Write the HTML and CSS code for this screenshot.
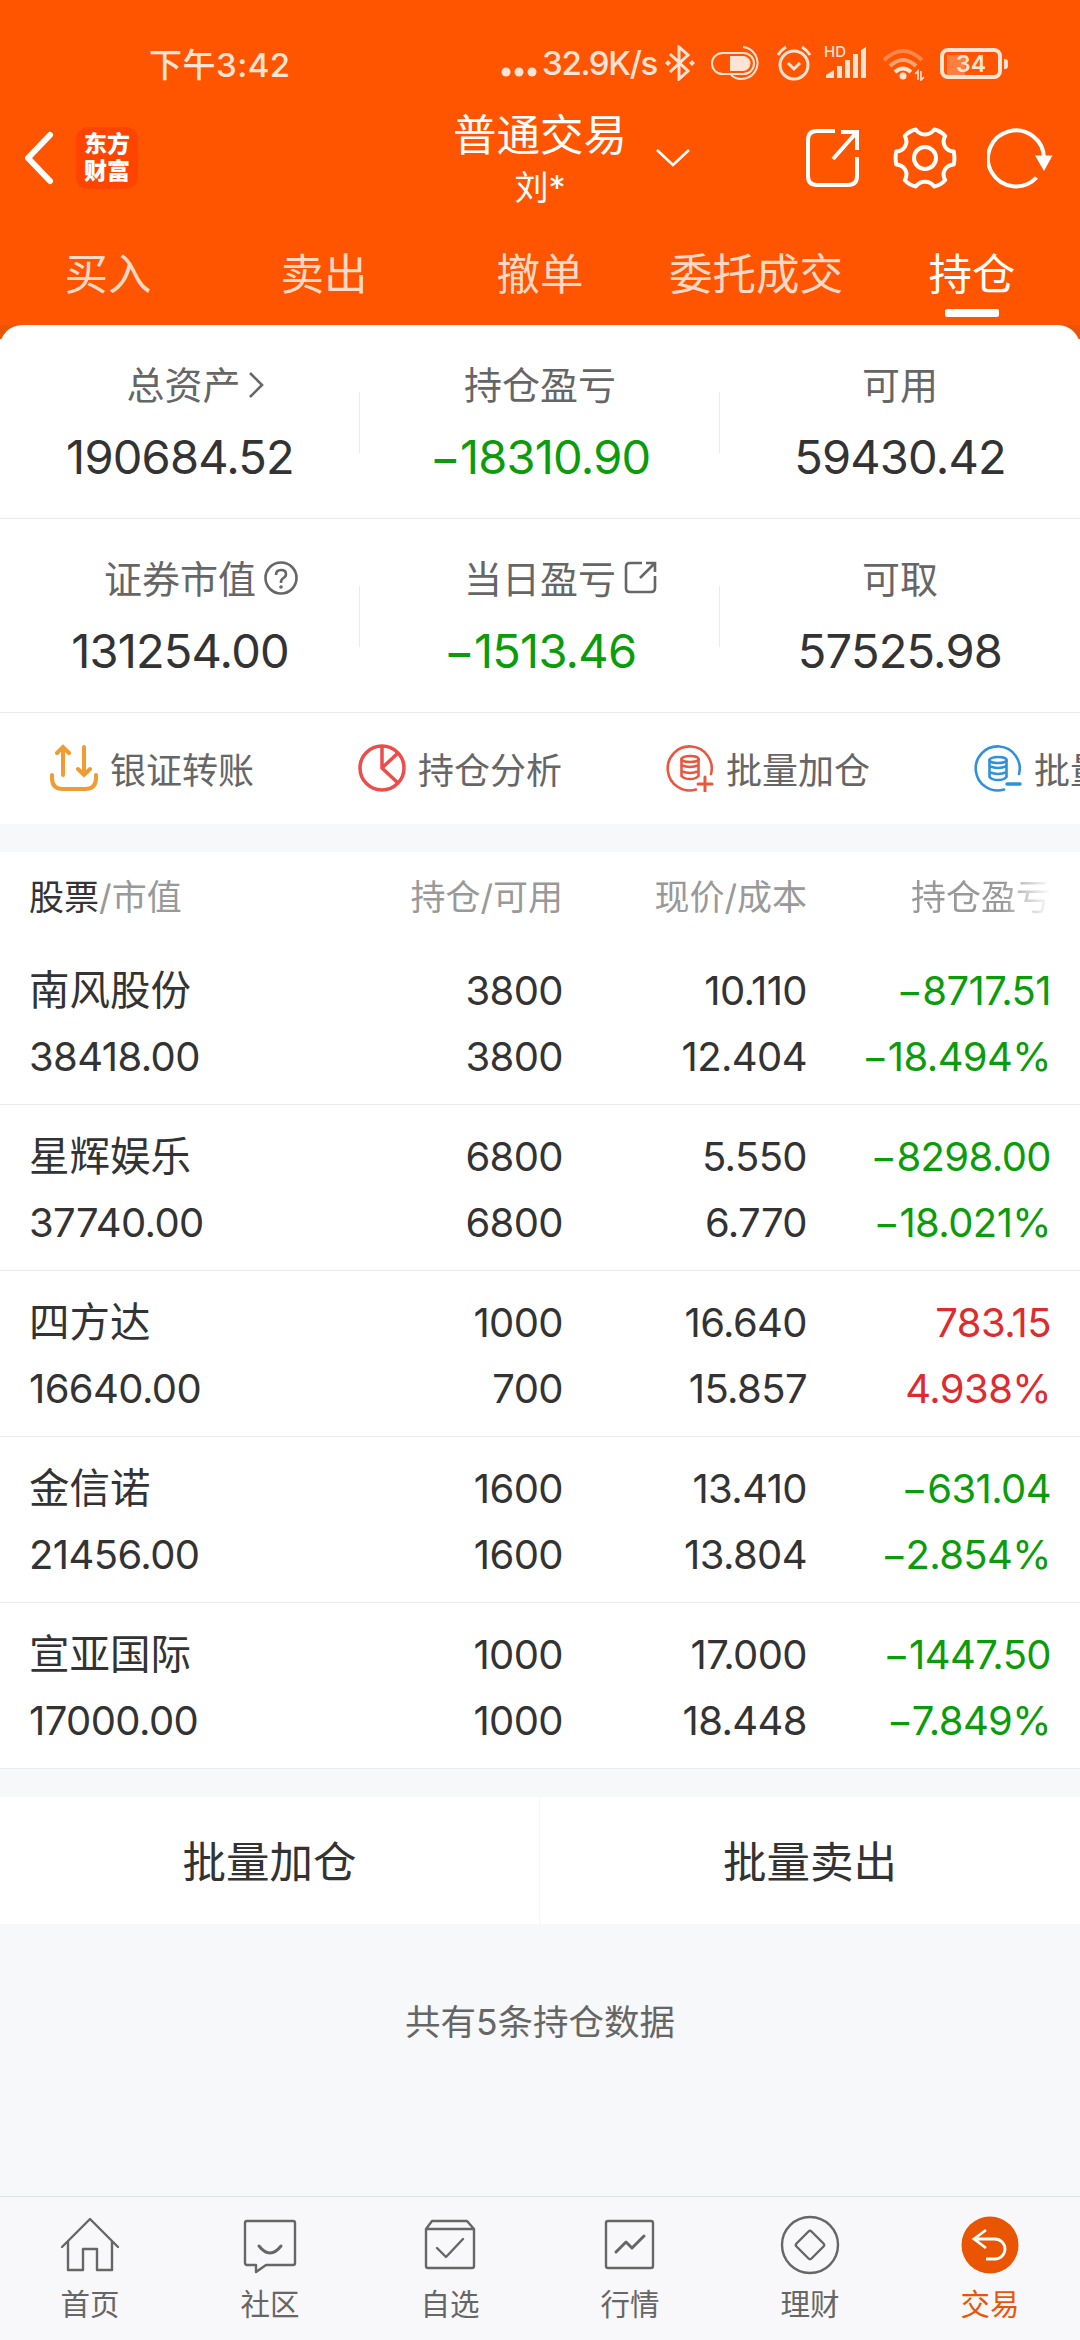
FILE: index.html
```html
<!DOCTYPE html>
<html lang="zh-CN">

<head>
    <meta charset="UTF-8">
    <meta name="viewport" content="width=device-width, initial-scale=1.0">
    <link rel="stylesheet" href="styles.css">
    <title>普通交易</title>
</head>

<body>

    <div class="header">
        <div class="status">
            <span class="clock">下午3:42</span>
            <svg class="dots" width="36" height="40"><g fill="currentColor"><circle cx="5" cy="29" r="4.5"/><circle cx="18" cy="29" r="4.5"/><circle cx="31" cy="29" r="4.5"/></g></svg>
            <span class="speed">32.9K/s</span>
            <svg class="bluetooth" width="30" height="36" fill="none" stroke="currentColor" stroke-width="3"><path d="M5 9L23 26L14 34V2L23 10L5 27"/><path d="M0 18l3-3 3 3-3 3zM24 18l3-3 3 3-3 3z" fill="currentColor" stroke="none"/></svg>
            <svg class="pill" width="50" height="36" fill="none" stroke="currentColor" stroke-width="2"><rect x="1" y="8" width="42" height="21" rx="10.5"/><path d="M32 2a16 16 0 1 1-12 28"/><path d="M19 11h13a7.500 7.500 0 0 1 0 15H19z" fill="currentColor" stroke="none"/></svg>
            <svg class="alarm" width="36" height="36" fill="none" stroke="currentColor" stroke-width="3"><circle cx="18" cy="20" r="14"/><path d="M12 18l6 6 6-6M2 10q3-5 8-8M34 10q-3-5-8-8"/></svg>
            <span class="signal">
                <small>HD</small>
                <svg width="42" height="36" fill="currentColor"><path d="M1 33v-3l8-5v8zM12 21h5v12h-5zM20 15h5v18h-5zM28 9h5v24h-5zM36 5l5-3v31h-5z"/></svg>
            </span>
            <svg class="wifi" width="43" height="36" fill="none" stroke="currentColor" stroke-width="4"><path d="M2 15q19-18 38 0" opacity=".35"/><path d="M8 21q13-12 26 0" opacity=".55"/><path d="M13 27q8-7 16 0"/><circle cx="21" cy="31" r="3.500" fill="currentColor" stroke="none"/><path d="M36 35v-9l-3 3M39 26v9l3-3" stroke-width="1.600"/></svg>
            <span class="battery"><b>34</b></span>
        </div>

        <div class="titlebar">
            <svg class="back" width="32" height="56" fill="none" stroke="currentColor" stroke-width="6" stroke-linecap="round" stroke-linejoin="round"><path d="M28 5L6 28L28 51"/></svg>
            <div class="logo">东方<br>财富</div>
            <div class="title">
                <h1>普通交易</h1>
                <p>刘*</p>
            </div>
            <svg class="down" width="36" height="20" fill="none" stroke="currentColor" stroke-width="2.600"><path d="M2 2L18 17L34 2"/></svg>
            <svg class="share" width="56" height="60" fill="none" stroke="currentColor" stroke-width="4"><path d="M30 3H12Q3 3 3 12V48Q3 57 12 57H43Q52 57 52 48V29M28 31L51 5M36 4H52V22"/></svg>
            <svg class="gear" width="64" height="64" viewBox="-32 -32 64 64" fill="none" stroke="currentColor" stroke-width="4" stroke-linejoin="round"><path d="M-9.200-28.500C-5-22 5-22 9.200-28.500Q16-27 20.200-22C16-15 20.500-7 28.800-6.500Q30 0 28.800 6.500C20.500 7 16 15 20.200 22Q16 27 9.200 28.500C5 22-5 22-9.200 28.500Q-16 27-20.200 22C-16 15-20.500 7-28.800 6.500Q-30 0-28.800-6.500C-20.500-7-16-15-20.200-22Q-16-27-9.200-28.500Z"/><circle r="11"/></svg>
            <svg class="refresh" width="66" height="64" fill="none" stroke="currentColor" stroke-width="4"><path d="M57 33A28 28 0 1 0 49.500 51.500"/><path d="M48 29.500H65.500L57 45Z" fill="currentColor" stroke="none"/></svg>
        </div>

        <div class="tabs">
            <a href="#buy">买入</a>
            <a href="#sell">卖出</a>
            <a href="#cancel">撤单</a>
            <a href="#orders">委托成交</a>
            <a href="#position" class="active">持仓</a>
        </div>
    </div>

    <div class="assets-wrap">
        <div class="assets">
            <div class="stat">
                <p class="label total">总资产<svg class="more" width="16" height="28" fill="none" stroke="currentColor" stroke-width="2.600"><path d="M2 2L14 14L2 26"/></svg></p>
                <p class="value">190684.52</p>
            </div>
            <div class="stat">
                <p class="label">持仓盈亏</p>
                <p class="value green">−18310.90</p>
            </div>
            <div class="stat">
                <p class="label">可用</p>
                <p class="value">59430.42</p>
            </div>
            <div class="stat">
                <p class="label">证券市值<svg class="mark" width="34" height="34" fill="none" stroke="currentColor" stroke-width="2.600"><circle cx="17" cy="17" r="15.500"/><path d="M12 14Q12 9 17 9T22 13Q22 15.500 19.500 17T17 21V22"/><circle cx="17" cy="26" r="1.800" fill="currentColor" stroke="none"/></svg></p>
                <p class="value">131254.00</p>
            </div>
            <div class="stat">
                <p class="label">当日盈亏<svg class="mark" width="34" height="34" fill="none" stroke="currentColor" stroke-width="2.600"><path d="M18 2H6Q2 2 2 6V27Q2 31 6 31H27Q31 31 31 27V15M16 17L30 3M22 2H31V11"/></svg></p>
                <p class="value green">−1513.46</p>
            </div>
            <div class="stat">
                <p class="label">可取</p>
                <p class="value">57525.98</p>
            </div>
        </div>
    </div>

    <div class="actions">
        <a href="#transfer">
            <svg width="48" height="48" fill="none" stroke="#ef9d33" stroke-width="4" stroke-linecap="round"><path d="M13 31V3M7 9L13 3L19 9M34 3V31M28 25L34 31L40 25"/><path d="M2 31V34Q2 45 13 45H35Q46 45 46 34V31"/></svg>
            银证转账
        </a>
        <a href="#analysis">
            <svg width="48" height="48" fill="none" stroke="#ee4b4b" stroke-width="3.500"><circle cx="24" cy="24" r="22"/><path d="M24 2V24L40 39M24 24L40 9"/></svg>
            持仓分析
        </a>
        <a href="#add">
            <svg width="48" height="48" fill="none" stroke="#ec563e" stroke-width="2.600" stroke-linecap="round"><path d="M45 30A22 22 0 1 0 30 45.500"/><ellipse cx="24" cy="15" rx="8.500" ry="3"/><path d="M15.500 15V32Q18 35 24 35T32.500 32V15M15.500 21Q24 25 32.500 21M15.500 27Q24 31 32.500 27"/><path d="M32 40H46M39 33V47" stroke-width="3"/></svg>
            批量加仓
        </a>
        <a href="#reduce">
            <svg width="48" height="48" fill="none" stroke="#3190dc" stroke-width="2.600" stroke-linecap="round"><path d="M45 30A22 22 0 1 0 30 45.500"/><ellipse cx="24" cy="16" rx="8.500" ry="3"/><path d="M15.500 16V33Q18 36 24 36T32.500 33V16M15.500 22Q24 26 32.500 22M15.500 28Q24 32 32.500 28"/><path d="M33 40H46" stroke-width="3.500"/></svg>
            批量卖出
        </a>
    </div>

    <div class="holdings">
        <div class="row head">
            <span><b>股票</b>/市值</span>
            <span>持仓/可用</span>
            <span>现价/成本</span>
            <span class="fade">持仓盈亏</span>
        </div>
        <div class="row">
            <span class="name">南风股份</span><span>3800</span><span>10.110</span><span class="green">−8717.51</span>
            <span>38418.00</span><span>3800</span><span>12.404</span><span class="green">−18.494%</span>
        </div>
        <div class="row">
            <span class="name">星辉娱乐</span><span>6800</span><span>5.550</span><span class="green">−8298.00</span>
            <span>37740.00</span><span>6800</span><span>6.770</span><span class="green">−18.021%</span>
        </div>
        <div class="row">
            <span class="name">四方达</span><span>1000</span><span>16.640</span><span class="red">783.15</span>
            <span>16640.00</span><span>700</span><span>15.857</span><span class="red">4.938%</span>
        </div>
        <div class="row">
            <span class="name">金信诺</span><span>1600</span><span>13.410</span><span class="green">−631.04</span>
            <span>21456.00</span><span>1600</span><span>13.804</span><span class="green">−2.854%</span>
        </div>
        <div class="row">
            <span class="name">宣亚国际</span><span>1000</span><span>17.000</span><span class="green">−1447.50</span>
            <span>17000.00</span><span>1000</span><span>18.448</span><span class="green">−7.849%</span>
        </div>
    </div>

    <div class="batch">
        <a href="#batch-add">批量加仓</a>
        <a href="#batch-sell">批量卖出</a>
    </div>

    <p class="count">共有5条持仓数据</p>

    <div class="navbar">
        <a href="#home">
            <svg width="60" height="60" fill="none" stroke="currentColor" stroke-width="2.400" stroke-linecap="round" stroke-linejoin="round"><path d="M2 32L30 4L58 32M8 26V55H23V34H37V55H52V26"/></svg>
            首页
        </a>
        <a href="#community">
            <svg width="60" height="60" fill="none" stroke="currentColor" stroke-width="2.400" stroke-linecap="round" stroke-linejoin="round"><path d="M7 6H53Q55 6 55 8V48Q55 50 53 50H26L16 57V50H7Q5 50 5 48V8Q5 6 7 6Z"/><path d="M19 31Q30 45 41 31" stroke-width="3"/></svg>
            社区
        </a>
        <a href="#watch">
            <svg width="60" height="60" fill="none" stroke="currentColor" stroke-width="2.400" stroke-linecap="round" stroke-linejoin="round"><path d="M6 14L12 6H47L54 14V51Q54 53 52 53H8Q6 53 6 51ZM6 14H54M17 33L26 42L43 24"/></svg>
            自选
        </a>
        <a href="#market">
            <svg width="60" height="60" fill="none" stroke="currentColor" stroke-width="2.400" stroke-linecap="round" stroke-linejoin="round"><rect x="6" y="6" width="47" height="47" rx="2"/><path d="M16 37L26 27L32 33L44 21" stroke-width="3"/></svg>
            行情
        </a>
        <a href="#wealth">
            <svg width="60" height="60" fill="none" stroke="currentColor" stroke-width="2.400" stroke-linejoin="round"><circle cx="30" cy="30" r="28"/><path d="M28.500 16.500Q30 15 31.500 16.500L43.500 28.500Q45 30 43.500 31.500L31.500 43.500Q30 45 28.500 43.500L16.500 31.500Q15 30 16.500 28.500Z"/></svg>
            理财
        </a>
        <a href="#trade" class="active">
            <svg width="60" height="60" fill="none" stroke="#fff" stroke-width="2.800"><circle cx="30" cy="30" r="28.500" fill="currentColor" stroke="none"/><path d="M26 15L14 24L26 33M14 24H35A10 10 0 0 1 35 44H26"/></svg>
            交易
        </a>
    </div>

</body>

</html>
```

FILE: styles.css
```css
body {
    margin: 0;
    padding: 0;
    min-height: 2340px;
    display: flex;
    flex-direction: column;
    background-color: #f7f8fa;
    color: #333;
    font-family: Inter, "Noto Sans CJK SC", sans-serif;
    font-size: 40px;
    overflow-x: hidden;
}

h1,
p {
    margin: 0;
    font-weight: 400;
}

a {
    color: inherit;
    text-decoration: none;
}

svg {
    display: block;
    flex: none;
}

.green {
    color: #0a9c0a;
}

.red {
    color: #df2b2f;
}

/* header */
.header {
    background-color: #ff5500;
    color: #fff;
    height: 325px;
}

.status {
    height: 74px;
    padding: 26px 70px 0 149px;
    display: flex;
    align-items: center;
    color: #ffe4d6;
    font-size: 33px;
    font-weight: 500;
    white-space: nowrap;
}

.clock {
    width: 352px;
    letter-spacing: 0.5px;
}

.speed {
    width: 114px;
    margin-left: 5px;
    letter-spacing: -1.3px;
}

.bluetooth {
    margin-left: 9px;
}

.pill {
    margin-left: 16px;
}

.alarm {
    margin-left: 15px;
}

.signal {
    position: relative;
    margin-left: 13px;
}

.signal small {
    position: absolute;
    left: -1px;
    top: 0;
    font-size: 15px;
    line-height: 14px;
}

.wifi {
    margin-left: 15px;
}

.battery {
    position: relative;
    box-sizing: border-box;
    width: 62px;
    height: 31px;
    margin-left: 15px;
    border: 4px solid currentColor;
    border-radius: 8px;
    text-align: center;
    background: linear-gradient(90deg, #ff7f40 18px, transparent 18px) 3px 3px no-repeat;
}

.battery b {
    display: block;
    font-size: 23px;
    line-height: 24px;
    font-weight: 600;
}

.battery::after {
    content: "";
    position: absolute;
    right: -10px;
    top: 7px;
    width: 4px;
    height: 10px;
    border-radius: 0 3px 3px 0;
    background-color: currentColor;
}

.titlebar {
    height: 116px;
    display: flex;
    align-items: center;
}

.back {
    margin-left: 22px;
}

.logo {
    width: 62px;
    height: 58px;
    padding-top: 4px;
    margin-left: 22px;
    border-radius: 12px;
    background-color: #ff4400;
    text-align: center;
    font-size: 23px;
    line-height: 27px;
    font-weight: 900;
}

.title {
    width: 200px;
    height: 107px;
    padding-top: 9px;
    margin-left: 302px;
    text-align: center;
}

.title h1 {
    font-size: 43.500px;
    line-height: 52px;
    white-space: nowrap;
}

.title p {
    font-size: 34px;
    line-height: 54px;
}

.down {
    margin-left: 15px;
}

.share {
    margin-left: 114px;
}

.gear {
    margin-left: 32px;
}

.refresh {
    margin-left: 30px;
}

.tabs {
    display: grid;
    grid-template-columns: repeat(5, 1fr);
    padding-top: 32px;
    text-align: center;
    font-size: 43.500px;
    line-height: 52px;
    color: #ffd9c6;
}

.tabs .active {
    color: #fff;
}

.tabs .active::after {
    content: "";
    display: block;
    width: 54px;
    height: 8px;
    margin: 9px auto 0;
    border-radius: 2px;
    background-color: #fff;
}

/* account summary */
.assets-wrap {
    background: linear-gradient(#ea5504 14px, #fff 14px);
}

.assets {
    display: grid;
    grid-template-columns: repeat(3, 1fr);
    background-color: #fff;
    border-radius: 22px 22px 0 0;
}

.stat {
    box-sizing: border-box;
    height: 194px;
    padding-top: 34px;
    border-bottom: 1px solid #ebebeb;
    text-align: center;
    background: linear-gradient(#ebebeb, #ebebeb) right 67px / 1px 61px no-repeat;
}

.stat:nth-child(3n) {
    background: none;
}

.label {
    display: flex;
    justify-content: center;
    align-items: center;
    font-size: 38px;
    line-height: 52px;
    color: #666;
}

.total {
    padding-left: 7px;
}

.more {
    margin: 0 -23px 0 7px;
}

.mark {
    margin: -2px -42px 0 8px;
}

.value {
    margin-top: 17px;
    font-size: 47px;
    line-height: 58px;
    letter-spacing: -0.8px;
}

.actions {
    display: flex;
    height: 111px;
    padding-left: 50px;
    overflow: hidden;
    background-color: #fff;
}

.actions a {
    flex: none;
    width: 308px;
    height: 109px;
    display: flex;
    align-items: center;
    gap: 12px;
    font-size: 36px;
    color: #666;
}

/* holdings */
.holdings {
    margin-top: 30px;
    margin-top: 28px;
    background-color: #fff;
}

.row {
    display: grid;
    grid-template-columns: 290px 244px 244px 244px;
    grid-auto-rows: 66px;
    box-sizing: border-box;
    height: 166px;
    padding: 19px 28px 0 29px;
    border-bottom: 1px solid #ebebeb;
    line-height: 66px;
    text-align: right;
    letter-spacing: -0.6px;
}

.row span:nth-child(4n+1) {
    text-align: left;
}

.row .name {
    font-size: 40.500px;
    letter-spacing: 0;
}

.head {
    height: 87px;
    padding-top: 12px;
    border-bottom: none;
    font-size: 35px;
    color: #999;
    letter-spacing: 0;
}

.head b {
    font-weight: 400;
    color: #333;
}

.fade {
    -webkit-mask-image: linear-gradient(90deg, #000 80%, transparent);
    mask-image: linear-gradient(90deg, #000 80%, transparent);
}

.batch {
    display: grid;
    grid-template-columns: 1fr 1fr;
    height: 127px;
    margin-top: 28px;
    background-color: #fff;
    text-align: center;
    font-size: 43.500px;
    line-height: 131px;
}

.batch a:first-child {
    height: 127px;
    border-right: 1px solid #f5f5f5;
}

.count {
    margin-top: 69px;
    text-align: center;
    font-size: 35.500px;
    line-height: 60px;
    color: #666;
}

/* bottom navigation */
.navbar {
    display: grid;
    grid-template-columns: repeat(6, 1fr);
    height: 143px;
    margin-top: auto;
    border-top: 1px solid #e0e1e3;
    background-color: #f8f8fa;
}

.navbar a {
    display: flex;
    flex-direction: column;
    align-items: center;
    padding-top: 18px;
    font-size: 29.500px;
    line-height: 58px;
    color: #666;
}

.navbar .active {
    color: #ea5504;
}
```
